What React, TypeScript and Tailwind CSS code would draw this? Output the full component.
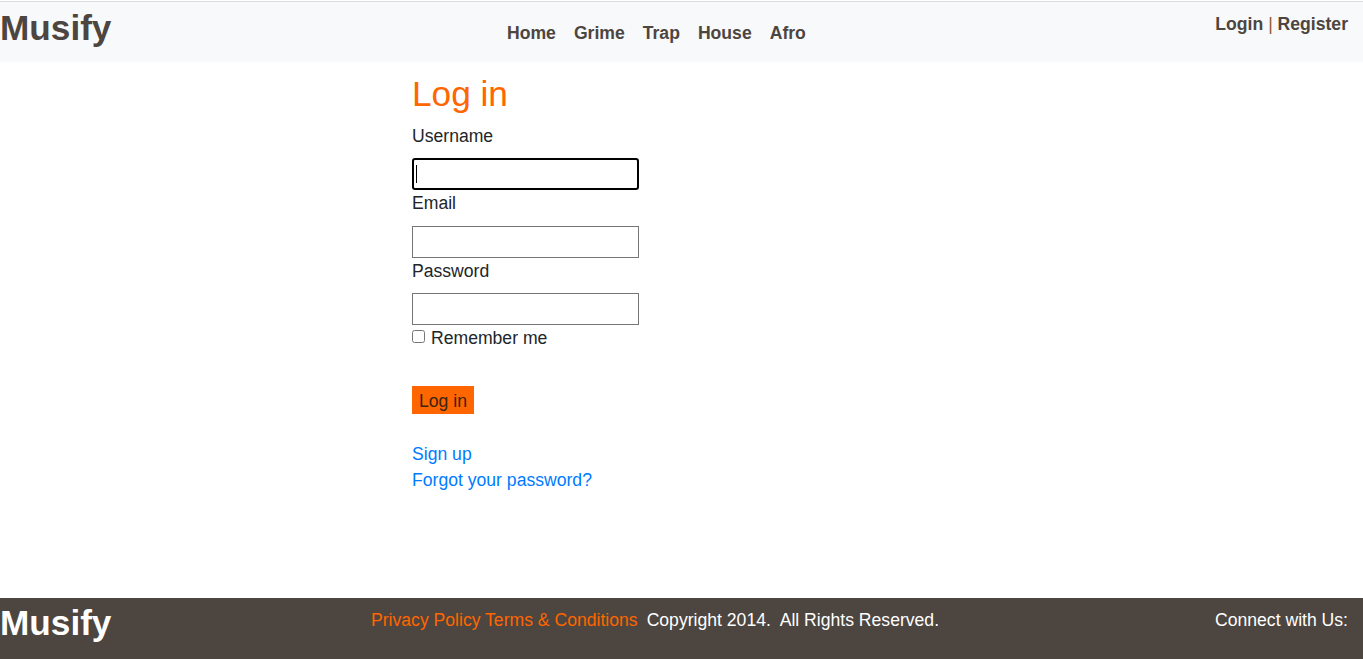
import React from 'react';

const navItems = ['Home', 'Grime', 'Trap', 'House', 'Afro'];

const Field: React.FC<{ label: string; type?: string; focused?: boolean }> = ({ label, type = 'text', focused }) => (
  <div>
    <label className="block leading-[26.4px] mb-[9px]">{label}</label>
    {focused ? (
      <div className="relative w-[227px]">
        <input
          type={type}
          className="block w-[227px] h-[32px] border-2 border-black rounded-[3px] bg-white outline-none"
        />
        <span className="absolute left-[4px] top-[7px] w-px h-[18px] bg-black" />
      </div>
    ) : (
      <input type={type} className="block w-[227px] h-[32px] border border-[#767676] bg-white outline-none" />
    )}
  </div>
);

export default function App() {
  return (
    <div className="min-h-screen flex flex-col bg-white pt-px text-[17.6px] text-[#212529] font-['Liberation_Sans',Arial,sans-serif]">
      {/* header */}
      <header className="h-[61px] shrink-0 flex items-start border-t border-[#dcdcdc] bg-[#f8f9fa] text-[#4d453f] font-bold">
        <div className="w-[507px] shrink-0 pt-[5px]">
          <a className="block text-[35.2px] leading-[42px]">Musify</a>
        </div>
        <nav className="flex gap-[18px] pt-[18px] leading-[26.4px]">
          {navItems.map((n) => (
            <a key={n}>{n}</a>
          ))}
        </nav>
        <div className="ml-auto pr-[15px] pt-[9px] leading-[26.4px]">
          <a>Login</a> <span className="text-[#8a5a30] font-normal">|</span> <a>Register</a>
        </div>
      </header>

      {/* login form */}
      <main className="flex-1">
        <div className="mx-auto w-[539px]">
          <h1 className="mt-[11px] mb-2 text-[35.2px] leading-[42px] text-[#ff6600]">Log in</h1>
          <form onSubmit={(e) => e.preventDefault()}>
            <Field label="Username" focused />
            <Field label="Email" type="email" />
            <Field label="Password" type="password" />
            <label className="flex items-center leading-[26.4px]">
              <input type="checkbox" className="w-[13px] h-[13px] m-0 mr-[6px] mt-[-3px]" />
              Remember me
            </label>
            <button
              type="submit"
              className="mt-[34px] h-[28px] px-[7px] bg-[#ff6600] text-[#3a2412] leading-[30px]"
            >
              Log in
            </button>
          </form>
          <div className="mt-[27px] leading-[26.4px] text-[#007bff]">
            <a className="block">Sign up</a>
            <a className="block">Forgot your password?</a>
          </div>
        </div>
      </main>

      {/* footer */}
      <footer className="h-[61px] shrink-0 flex items-start bg-[#4d453f] text-white">
        <div className="w-[371px] shrink-0 pt-[4px]">
          <span className="block font-bold text-[35.2px] leading-[42px]">Musify</span>
        </div>
        <div className="pt-[9px] leading-[26.4px]">
          <a className="text-[#ff6600]">Privacy Policy</a> <a className="text-[#ff6600]">Terms &amp; Conditions</a>
          <span className="ml-[9px]">Copyright 2014.&nbsp; All Rights Reserved.</span>
        </div>
        <div className="ml-auto pr-[15px] pt-[9px] leading-[26.4px]">Connect with Us:</div>
      </footer>
    </div>
  );
}
